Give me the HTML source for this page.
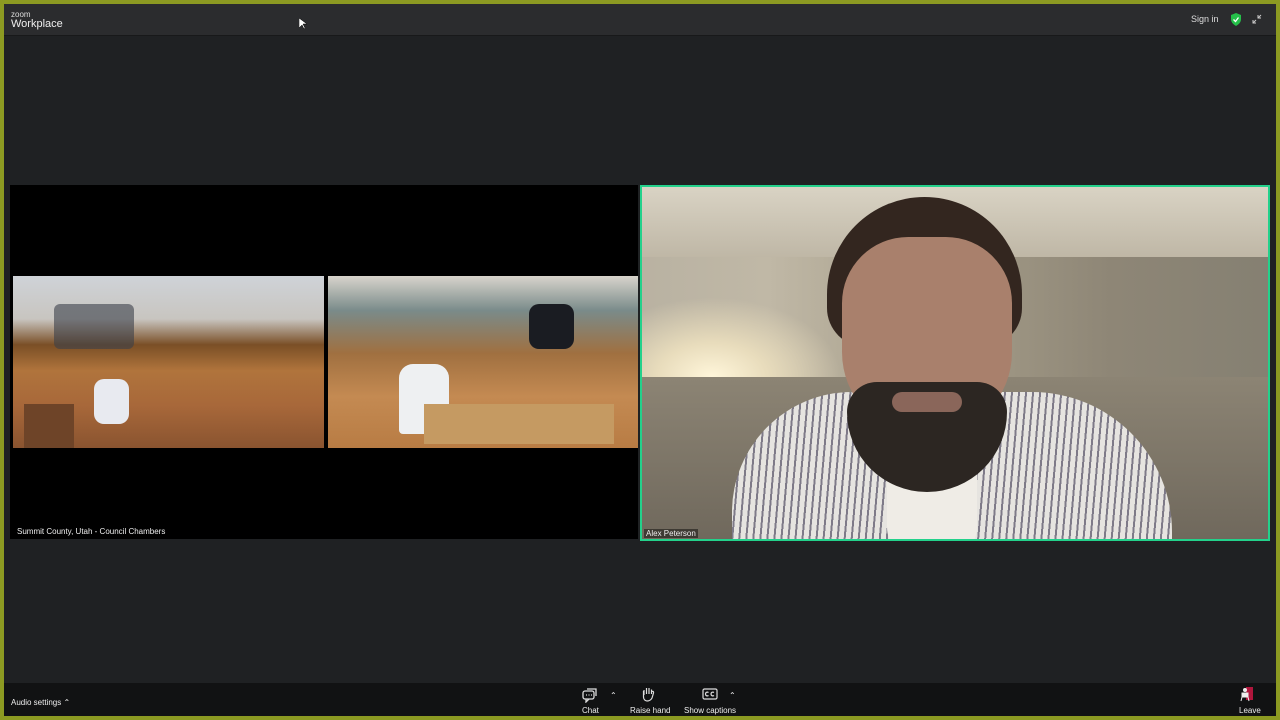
<!DOCTYPE html>
<html><head><meta charset="utf-8"><style>
*{margin:0;padding:0;box-sizing:border-box}
body{width:1280px;height:720px;background:#8c9a22;position:relative;overflow:hidden;font-family:"Liberation Sans",sans-serif;color:#fff}
#win{position:absolute;left:4px;top:4px;width:1272px;height:712px;background:#1f2123}
#top{position:absolute;left:0;top:0;width:1272px;height:32px;background:#2b2c2e;border-bottom:1px solid #18191a}
.abs{position:absolute}
#bot{position:absolute;left:0;top:679px;width:1272px;height:33px;background:#111213}
.lbl{font-size:8px;color:#eee;position:absolute;white-space:nowrap}
</style></head><body>
<div id="win">
 <div id="top">
  <div class="abs" style="left:7px;top:6px;font-size:8px;color:#ddd">zoom</div>
  <div class="abs" style="left:7px;top:14px;font-size:11px;color:#eee">Workplace</div>
  <svg class="abs" style="left:295px;top:14px" width="8" height="12"><path d="M0 0 L0 10 L3 7 L5 11 L6 10 L4 6 L8 6Z" fill="#fff" stroke="#000" stroke-width=".5"/></svg>
  <div class="abs" style="left:1187px;top:10px;font-size:9px;color:#ddd">Sign in</div>
  <svg class="abs" style="left:1226px;top:9px" width="12" height="13"><path d="M6 0 L11 2 L11 6 C11 9.5 8.5 11.5 6 13 C3.5 11.5 1 9.5 1 6 L1 2Z" fill="#25c04a"/><path d="M3.5 6.5 L5.5 8.5 L8.5 4.5" stroke="#fff" stroke-width="1.3" fill="none"/></svg>
  <svg class="abs" style="left:1248px;top:10px" width="10" height="10" stroke="#ccc" fill="none"><path d="M1 9 L4 6 M1 6 V9 H4 M9 1 L6 4 M6 1 V4 H9"/></svg>
 </div>
 <div class="abs" style="left:6px;top:181px;width:628px;height:354px;background:#000"></div>
 <div class="abs" style="left:9px;top:272px;width:311px;height:172px;background:linear-gradient(180deg,#cfd3d8 0%,#c8c5c0 25%,#7a4f26 40%,#b0743c 55%,#a8683a 75%,#8a5430 100%)"></div>
 <div class="abs" style="left:50px;top:300px;width:80px;height:45px;background:#3a3f4a;opacity:.6;border-radius:6px"></div>
 <div class="abs" style="left:90px;top:375px;width:35px;height:45px;background:#e8eaf0;border-radius:10px"></div>
 <div class="abs" style="left:20px;top:400px;width:50px;height:44px;background:#6e4428"></div>
 <div class="abs" style="left:324px;top:272px;width:310px;height:172px;background:linear-gradient(180deg,#d8d4cc 0%,#7a8b8a 20%,#a07040 45%,#c48a52 70%,#b87c44 100%)"></div>
 <div class="abs" style="left:395px;top:360px;width:50px;height:70px;background:#eef0f2;border-radius:14px 14px 4px 4px"></div>
 <div class="abs" style="left:420px;top:400px;width:190px;height:40px;background:#c59a62"></div>
 <div class="abs" style="left:525px;top:300px;width:45px;height:45px;background:#1a1c22;border-radius:10px"></div>
 <div class="lbl" style="left:11px;top:523px;background:rgba(0,0,0,.5);padding:0 2px">Summit County, Utah - Council Chambers</div>
 <div class="abs" style="left:636px;top:181px;width:630px;height:356px;border:2px solid #23d18b;background:linear-gradient(90deg,#b9b2a2 0%,#c0b8a6 20%,#a8a08c 45%,#8e8676 75%,#858072 100%);overflow:hidden">
  <div class="abs" style="left:0;top:0;width:630px;height:70px;background:linear-gradient(180deg,#d9d3c4,#bfb7a6)"></div>
  <div class="abs" style="left:0;top:110px;width:200px;height:140px;background:radial-gradient(ellipse at 70px 80px,#fff6da 0%,#e8dcbc 30%,rgba(180,170,150,0) 70%)"></div>
  <div class="abs" style="left:0;top:190px;width:630px;height:170px;background:linear-gradient(180deg,#8c8474,#6e675b)"></div>
  <div class="abs" style="left:90px;top:205px;width:440px;height:200px;border-radius:120px 140px 0 0;background:repeating-linear-gradient(95deg,#e6e4e0 0 5px,#7e7a88 5px 7px)"></div>
  <div class="abs" style="left:245px;top:250px;width:90px;height:120px;background:#efece6;border-radius:30px"></div>
  <div class="abs" style="left:185px;top:10px;width:195px;height:150px;border-radius:100px 100px 40px 40px;background:#33261f"></div>
  <div class="abs" style="left:200px;top:50px;width:170px;height:200px;border-radius:70px 70px 90px 90px;background:#a9806c"></div>
  <div class="abs" style="left:205px;top:195px;width:160px;height:110px;border-radius:30px 30px 80px 80px;background:#2c2622"></div>
  <div class="abs" style="left:250px;top:205px;width:70px;height:20px;border-radius:10px;background:#8a665a"></div>
  <div class="lbl" style="left:2px;top:342px;background:rgba(0,0,0,.45);padding:0 2px">Alex Peterson</div>
 </div>
 <div id="bot">
  <div class="lbl" style="left:7px;top:15px">Audio settings ⌃</div>
  <svg class="abs" style="left:578px;top:5px" width="16" height="15" stroke="#ddd" fill="none" stroke-width="1.3"><rect x="1" y="3" width="11" height="8" rx="2"/><path d="M4 11 L4 14 L7 11"/><path d="M5 1 H14 V8"/><path d="M4 7h1M6.5 7h1M9 7h1"/></svg>
  <div class="lbl" style="left:606px;top:8px">⌃</div>
  <div class="lbl" style="left:578px;top:23px">Chat</div>
  <svg class="abs" style="left:637px;top:3px" width="14" height="16" stroke="#ddd" fill="none" stroke-width="1.2"><path d="M3 9 V4 M5.5 8 V2 M8 8 V2 M10.5 8 V3.5 M10.5 8 V6 C11 5 13 5 12.5 7 L11 12 C10 14 8 15 6 15 C4 15 2.5 13 2.5 11 L2.5 5"/></svg>
  <div class="lbl" style="left:626px;top:23px">Raise hand</div>
  <svg class="abs" style="left:698px;top:5px" width="16" height="12" stroke="#ddd" fill="none" stroke-width="1.2"><rect x="1" y="1" width="14" height="10" rx="1.5"/><path d="M6.5 4.5 C5 3.5 3.5 4.5 3.5 6 C3.5 7.5 5 8.5 6.5 7.5 M12 4.5 C10.5 3.5 9 4.5 9 6 C9 7.5 10.5 8.5 12 7.5"/></svg>
  <div class="lbl" style="left:725px;top:8px">⌃</div>
  <div class="lbl" style="left:680px;top:23px">Show captions</div>
  <svg class="abs" style="left:1235px;top:3px" width="16" height="16"><rect x="7" y="1" width="7" height="13" fill="#b0163c"/><circle cx="6" cy="4" r="2" fill="#eee"/><path d="M3 7 H9 V11 H3Z M3 11 L2 15 M9 11 L10 15" stroke="#eee" fill="#eee"/></svg>
  <div class="lbl" style="left:1235px;top:23px">Leave</div>
 </div>
</div>
</body></html>
